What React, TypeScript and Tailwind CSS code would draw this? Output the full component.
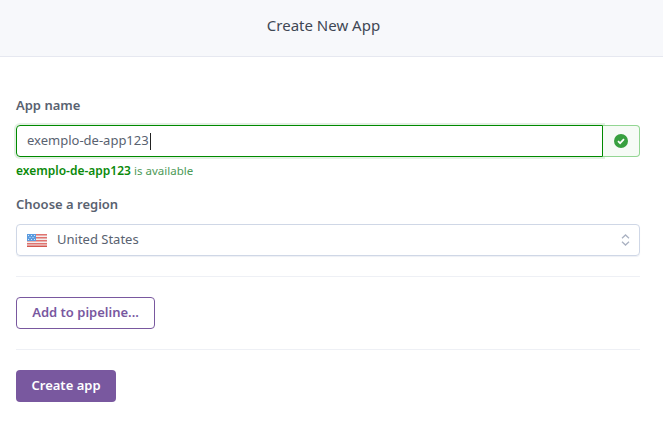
function UsFlag() {
  return (
    <svg width="20" height="13" viewBox="0 0 20 13" className="shrink-0">
      <rect width="20" height="13" fill="#f3eeee" />
      <rect y="0" width="20" height="1.5" fill="#e0736f" />
      <rect y="3" width="20" height="1.5" fill="#e0736f" />
      <rect y="6" width="20" height="1.5" fill="#e0736f" />
      <rect y="9" width="20" height="1.5" fill="#e0736f" />
      <rect y="11.5" width="20" height="1.5" fill="#d4574f" />
      <rect width="9" height="7" fill="#5b9bdf" />
      <g fill="#d5e6f8">
        <rect x="1" y="1" width="1" height="1" />
        <rect x="4" y="1" width="1" height="1" />
        <rect x="7" y="1" width="1" height="1" />
        <rect x="2.5" y="3" width="1" height="1" />
        <rect x="5.5" y="3" width="1" height="1" />
        <rect x="1" y="5" width="1" height="1" />
        <rect x="4" y="5" width="1" height="1" />
        <rect x="7" y="5" width="1" height="1" />
      </g>
    </svg>
  );
}

export default function App() {
  return (
    <div className="w-[663px] h-[432px] bg-white font-['Noto_Sans','Open_Sans',sans-serif] overflow-hidden">
      <div className="h-[57px] bg-[#f7f8fb] border-b border-[#e6e8f0] flex items-center justify-center pr-4 pb-[6px] text-[#3f4754] text-[15px]">
        Create New App
      </div>

      <div className="pl-4 pr-[23px] pt-[39px]">
        <div className="text-[13px] font-semibold leading-[18px] text-[#596270]">App name</div>

        <div className="flex mt-[11px] h-8">
          <div className="flex-1 flex items-center pl-[10px] border border-[#008a00] rounded-l shadow-[0_0_0_2px_#e3f0e3] text-[13px] text-[#596270]">
            exemplo-de-app123
            <span className="w-px h-[17px] ml-px bg-[#222]" />
          </div>
          <div className="w-[37px] flex items-center justify-center bg-[#f6fbf6] border border-l-0 border-[#93d693] rounded-r">
            <svg width="14" height="14" viewBox="0 0 14 14">
              <circle cx="7" cy="7" r="7" fill="#37a03f" />
              <path d="M4 7.2 6.1 9.2 10 5.2" fill="none" stroke="#fff" strokeWidth="1.7" />
            </svg>
          </div>
        </div>

        <div className="mt-[6px] text-[12px] leading-[16px] text-[#4d9a57]">
          <span className="font-semibold text-[#0a8a0a]">exemplo-de-app123</span>{" "}
          <span className="text-[11.5px]">is available</span>
        </div>

        <div className="mt-[16px] text-[13px] font-semibold leading-[18px] text-[#596270]">Choose a region</div>

        <div className="mt-[11px] h-8 flex items-center pl-[10px] pr-[9px] border border-[#cfd7e6] rounded shadow-[0_1px_1px_#eef0f5]">
          <UsFlag />
          <span className="ml-[10px] flex-1 text-[13px] text-[#596270]">United States</span>
          <svg width="9" height="14" viewBox="0 0 9 14" fill="none" stroke="#aab2c2" strokeWidth="1.3">
            <path d="M1 5.2 4.5 2 8 5.2" />
            <path d="M1 8.8 4.5 12 8 8.8" />
          </svg>
        </div>

        <div className="mt-[20px] border-t border-[#eef0f5]" />

        <button className="mt-[20px] block w-[139px] h-8 border border-[#79589f] rounded text-[13px] font-semibold text-[#79589f] bg-white">
          Add to pipeline...
        </button>

        <div className="mt-[20px] border-t border-[#eef0f5]" />

        <button className="mt-[20px] block w-[100px] h-8 rounded bg-[#79589f] text-[13px] font-semibold text-white">
          Create app
        </button>
      </div>
    </div>
  );
}
